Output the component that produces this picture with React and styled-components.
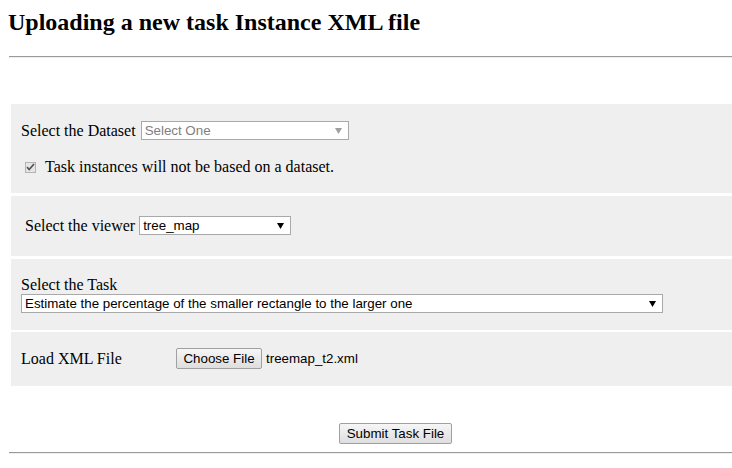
import React from 'react';
import styled, { createGlobalStyle } from 'styled-components';

const GlobalStyle = createGlobalStyle`
  body {
    margin: 0;
    overflow: hidden;
    background: #fff;
    color: #000;
    font-family: "Liberation Serif", "Times New Roman", serif;
    font-size: 16px;
  }
`;

const Page = styled.div`
  padding: 8px 0 0 8px;
`;

const Title = styled.h2`
  margin: 0 0 20px;
  font-size: 24px;
  font-weight: 700;
  line-height: 28px;
`;

const Rule = styled.hr`
  margin: 0;
  height: 0;
  border: 0;
  border-top: 1px solid #9a9a9a;
  border-bottom: 1px solid #eeeeee;
  margin-left: 1px;
`;

const Form = styled.form`
  display: flex;
  flex-direction: column;
  margin: 46px 0 0 3px;
`;

const Panel = styled.div`
  background: #efefef;
  padding: ${({ pad }) => pad || '17px 10px'};
  margin-top: ${({ gap }) => gap || 0}px;
  display: flex;
  flex-direction: ${({ stack }) => (stack ? 'column' : 'row')};
  align-items: ${({ stack }) => (stack ? 'stretch' : 'center')};
`;

const Row = styled.div`
  display: flex;
  align-items: center;
  gap: ${({ gap }) => gap || 0}px;
  margin-top: ${({ top }) => top || 0}px;
`;

const Label = styled.span`
  line-height: 18px;
  width: ${({ w }) => (w ? `${w}px` : 'auto')};
  flex-shrink: 0;
`;

const SelectBox = styled.div`
  position: relative;
  width: ${({ w }) => w}px;
  height: 19px;
`;

const NativeSelect = styled.select`
  appearance: none;
  width: 100%;
  height: 100%;
  box-sizing: border-box;
  margin: 0;
  padding: 0 20px 0 3px;
  border: 1px solid #a9a9a9;
  border-radius: 0;
  background-color: #fff;
  opacity: 1;
  font-family: "Liberation Sans", Arial, sans-serif;
  font-size: 13.33px;
  color: ${({ disabled }) => (disabled ? '#808080' : '#000')};
  outline: none;

  &:disabled {
    background-color: #fff;
    border-color: #a9a9a9;
    opacity: 1;
  }
`;

const Arrow = styled.svg`
  position: absolute;
  right: 7px;
  top: 7px;
  pointer-events: none;
`;

const CheckBox = styled.span`
  width: 11px;
  height: 11px;
  box-sizing: border-box;
  border: 1px solid #b4b4b4;
  background: #e6e6e6;
  display: flex;
  align-items: center;
  justify-content: center;
  margin: 0 9px 0 4px;
`;

const Button = styled.button`
  height: 21px;
  box-sizing: border-box;
  padding: 0 6px;
  border: 1px solid #a0a0a0;
  border-radius: 2px;
  background: linear-gradient(#f6f6f6, #dedede);
  font-family: "Liberation Sans", Arial, sans-serif;
  font-size: 13.33px;
  color: #000;
  width: ${({ w }) => w}px;
`;

const FileName = styled.span`
  font-family: "Liberation Sans", Arial, sans-serif;
  font-size: 13.33px;
  margin-left: 4px;
`;

const SubmitRow = styled.div`
  padding: 37px 0 8px 328px;
`;

const Select = ({ w, value, disabled }) => (
  <SelectBox w={w}>
    <NativeSelect disabled={disabled} defaultValue={value}>
      <option>{value}</option>
    </NativeSelect>
    <Arrow width="7" height="6" viewBox="0 0 7 6">
      <path d="M0 0h7L3.5 6z" fill={disabled ? '#a0a0a0' : '#000'} />
    </Arrow>
  </SelectBox>
);

export default function App() {
  return (
    <Page>
      <GlobalStyle />
      <Title>Uploading a new task Instance XML file</Title>
      <Rule />
      <Form onSubmit={(e) => e.preventDefault()}>
        <Panel stack>
          <Row gap={5}>
            <Label>Select the Dataset</Label>
            <Select w={208} value="Select One" disabled />
          </Row>
          <Row top={18}>
            <CheckBox>
              <svg width="9" height="8" viewBox="0 0 9 8">
                <path d="M1 4.2l2.2 2.3L8 1" fill="none" stroke="#555" strokeWidth="1.8" />
              </svg>
            </CheckBox>
            <Label>Task instances will not be based on a dataset.</Label>
          </Row>
        </Panel>
        <Panel gap={3} pad="20px 13px 21px 14px">
          <Row gap={4}>
            <Label>Select the viewer</Label>
            <Select w={152} value="tree_map" />
          </Row>
        </Panel>
        <Panel gap={3} stack>
          <Label>Select the Task</Label>
          <Row>
            <Select w={642} value="Estimate the percentage of the smaller rectangle to the larger one" />
          </Row>
        </Panel>
        <Panel gap={2} pad="16px 10px 17px">
          <Label w={155}>Load XML File</Label>
          <Button type="button" w={86}>Choose File</Button>
          <FileName>treemap_t2.xml</FileName>
        </Panel>
        <SubmitRow>
          <Button type="submit" w={113}>Submit Task File</Button>
        </SubmitRow>
      </Form>
      <Rule />
    </Page>
  );
}
